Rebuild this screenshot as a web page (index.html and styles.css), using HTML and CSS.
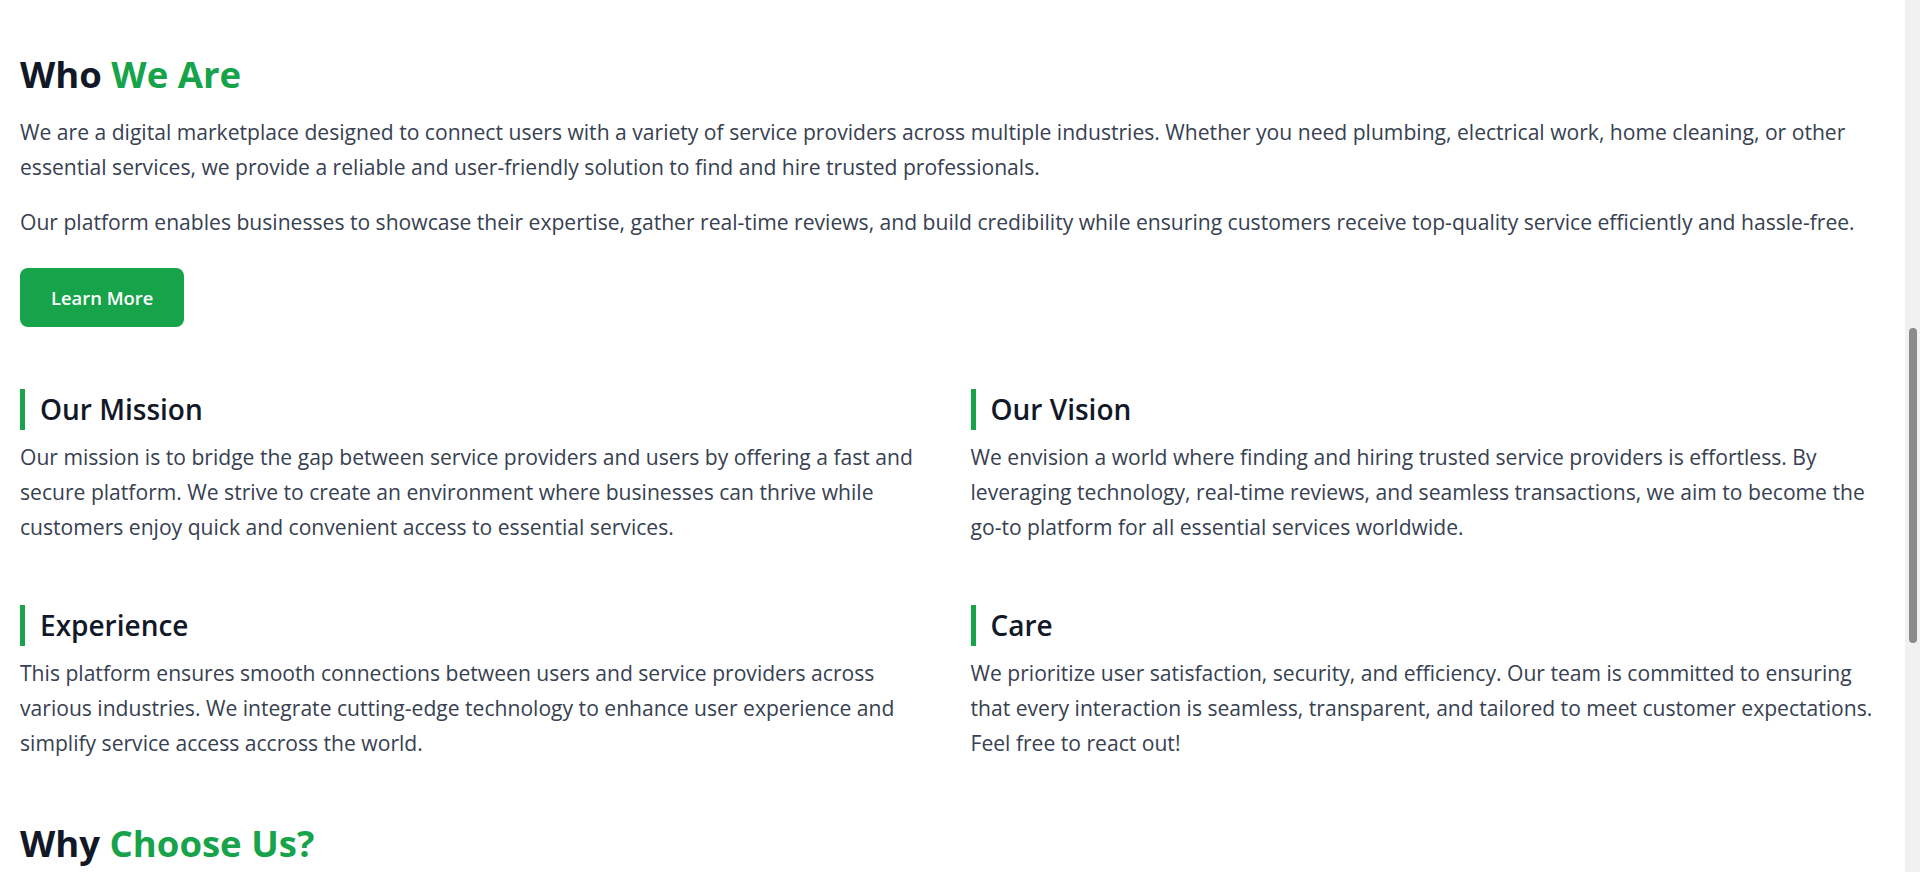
FILE: index.html
```html
<!DOCTYPE html>
<html lang="en">
<head>
<meta charset="utf-8">
<title>About Us</title>
<link rel="stylesheet" href="styles.css">
</head>
<body>
<div class="page">
  <main class="content">
    <section class="about">
      <h2 class="section-title">Who <span class="accent">We Are</span></h2>
      <p class="lead">We are a digital marketplace designed to connect users with a variety of service providers across multiple industries. Whether you need plumbing, electrical work, home cleaning, or other essential services, we provide a reliable and user-friendly solution to find and hire trusted professionals.</p>
      <p class="lead">Our platform enables businesses to showcase their expertise, gather real-time reviews, and build credibility while ensuring customers receive top-quality service efficiently and hassle-free.</p>
      <a class="btn" href="#">Learn More</a>
      <div class="cards">
        <div class="card">
          <h3 class="card-title">Our Mission</h3>
          <p class="card-text">Our mission is to bridge the gap between service providers and users by offering a fast and secure platform. We strive to create an environment where businesses can thrive while customers enjoy quick and convenient access to essential services.</p>
        </div>
        <div class="card">
          <h3 class="card-title">Our Vision</h3>
          <p class="card-text">We envision a world where finding and hiring trusted service providers is effortless. By leveraging technology, real-time reviews, and seamless transactions, we aim to become the go-to platform for all essential services worldwide.</p>
        </div>
        <div class="card">
          <h3 class="card-title">Experience</h3>
          <p class="card-text">This platform ensures smooth connections between users and service providers across various industries. We integrate cutting-edge technology to enhance user experience and simplify service access accross the world.</p>
        </div>
        <div class="card">
          <h3 class="card-title">Care</h3>
          <p class="card-text">We prioritize user satisfaction, security, and efficiency. Our team is committed to ensuring that every interaction is seamless, transparent, and tailored to meet customer expectations. Feel free to react out!</p>
        </div>
      </div>
    </section>
    <section class="why">
      <h2 class="section-title">Why <span class="accent">Choose Us?</span></h2>
    </section>
  </main>
  <div class="scrollbar"><div class="thumb"></div></div>
</div>
</body>
</html>
```

FILE: styles.css
```css
* { box-sizing: border-box; }
html, body { margin: 0; padding: 0; }
body {
  background: #ffffff;
  font-family: "Open Sans", "Noto Sans", "Liberation Sans", sans-serif;
  color: #374151;
  overflow: hidden;
}
.page {
  display: flex;
  height: 872px;
  overflow: hidden;
}
.content {
  flex: 1;
  padding: 0 20px;
  min-width: 0;
}
.about { padding-top: 54px; }
.section-title {
  margin: 0;
  font-size: 36.5px;
  line-height: 40px;
  font-weight: 700;
  color: #111827;
}
.accent { color: #16a34a; }
.lead {
  margin: 20px 0 0;
  font-size: 21.1px;
  line-height: 35px;
  color: #374151;
}
.lead + .lead { margin-top: 20px; }
.btn {
  display: inline-block;
  margin-top: 29px;
  padding: 16px 31px;
  background: #16a34a;
  color: #ffffff;
  font-size: 18.4px;
  line-height: 27px;
  font-weight: 600;
  text-decoration: none;
  border-radius: 8px;
}
.cards {
  display: grid;
  grid-template-columns: 1fr 1fr;
  column-gap: 36px;
  row-gap: 61px;
  margin-top: 62px;
}
.card-title {
  margin: 0;
  border-left: 5px solid #16a34a;
  padding-left: 15px;
  font-size: 28px;
  line-height: 41px;
  font-weight: 600;
  color: #111827;
}
.card-text {
  margin: 9px 0 0;
  font-size: 21.1px;
  line-height: 35px;
  color: #374151;
}
.why { padding-top: 63px; }
.scrollbar {
  width: 15px;
  flex: none;
  background: #f1f1f1;
  padding-top: 328px;
  display: flex;
  justify-content: center;
}
.thumb {
  width: 8px;
  height: 315px;
  border-radius: 4px;
  background: #8b8b8b;
}
```
